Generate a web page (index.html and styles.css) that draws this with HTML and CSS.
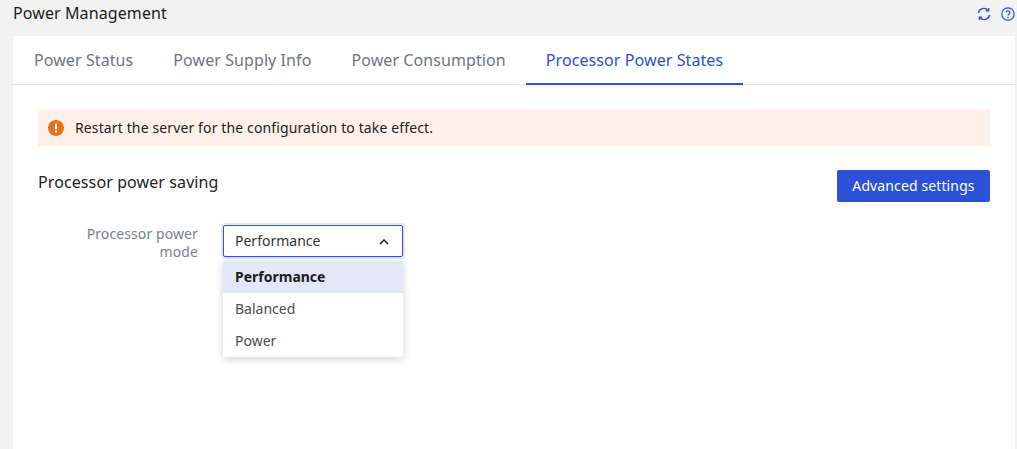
FILE: index.html
```html
<!DOCTYPE html>
<html lang="en">
<head>
<meta charset="utf-8">
<title>Power Management</title>
<link rel="stylesheet" href="styles.css">
</head>
<body>
<div class="page">
  <header class="topbar">
    <h1 class="page-title">Power Management</h1>
    <div class="top-icons">
      <svg class="icon" viewBox="0 0 14 14" fill="none" stroke="#2c50d8" stroke-width="1.4">
        <path d="M1.4 6.2A5.6 5.6 0 0 1 11 3.2"/>
        <path d="M12.6 7.8A5.6 5.6 0 0 1 3 10.8"/>
        <path d="M11.7 1v2.9H8.8" stroke-width="1.3"/>
        <path d="M2.3 13v-2.9h2.9" stroke-width="1.3"/>
      </svg>
      <svg class="icon" viewBox="0 0 14 14" fill="none" stroke="#2c50d8" stroke-width="1.2">
        <circle cx="7" cy="7" r="6.2"/>
        <path d="M5.2 5.6A1.8 1.8 0 1 1 7.9 7.2C7.3 7.6 7 7.9 7 8.6"/>
        <circle cx="7" cy="10.3" r=".5" fill="#2c50d8" stroke-width=".5"/>
      </svg>
    </div>
  </header>
  <main class="card">
    <nav class="tabs">
      <a class="tab">Power Status</a>
      <a class="tab">Power Supply Info</a>
      <a class="tab">Power Consumption</a>
      <a class="tab tab-active">Processor Power States</a>
    </nav>
    <section class="content">
      <div class="alert">
        <svg class="alert-icon" viewBox="0 0 16 16">
          <circle cx="8" cy="8" r="8" fill="#e8701f"/>
          <rect x="7" y="3.4" width="2" height="6.2" rx="1" fill="#fff"/>
          <circle cx="8" cy="11.6" r="1.15" fill="#fff"/>
        </svg>
        <span>Restart the server for the configuration to take effect.</span>
      </div>
      <div class="section-head">
        <h2 class="section-title">Processor power saving</h2>
        <button class="primary-btn">Advanced settings</button>
      </div>
      <div class="form-row">
        <label class="form-label">Processor power mode</label>
        <div class="select-wrap">
          <div class="select">
            <span class="select-value">Performance</span>
            <svg class="chevron" viewBox="0 0 10 6" fill="none" stroke="#222" stroke-width="1.6">
              <path d="M1 5l4-4 4 4"/>
            </svg>
          </div>
          <ul class="menu">
            <li class="menu-item menu-item-selected">Performance</li>
            <li class="menu-item">Balanced</li>
            <li class="menu-item">Power</li>
          </ul>
        </div>
      </div>
    </section>
  </main>
</div>
</body>
</html>
```

FILE: styles.css
```css
* { box-sizing: border-box; }
html, body { margin: 0; height: 100%; overflow: hidden; }
body {
  background: #f2f2f2;
  font-family: "Noto Sans", "Open Sans", sans-serif;
  color: #222;
  letter-spacing: .1px;
}
.page { display: flex; flex-direction: column; height: 449px; padding: 0 2px 0 13px; }
.topbar {
  height: 36px;
  display: flex;
  align-items: flex-start;
  justify-content: space-between;
  flex: none;
}
.page-title { margin: 2px 0 0; font-size: 16px; line-height: 22px; font-weight: 400; color: #1c1c1c; }
.top-icons { display: flex; gap: 10px; margin-top: 7px; margin-right: 0; }
.icon { width: 14px; height: 14px; display: block; }
.card { flex: 1; background: #fff; }
.tabs { display: flex; height: 49px; border-bottom: 1px solid #e6e6e8; padding-left: 1px; }
.tab {
  height: 49px;
  padding: 0 20px;
  font-size: 16px;
  line-height: 48px;
  letter-spacing: .085px;
  color: #6f7480;
}
.tab-active { color: #2c50d8; border-bottom: 2px solid #2c50d8; }
.content { padding: 24px 25px 0; }
.alert {
  height: 37px;
  background: #fff1e9;
  display: flex;
  align-items: center;
  gap: 11px;
  padding-left: 10px;
  font-size: 14px;
  letter-spacing: .125px;
  color: #222;
}
.alert-icon { width: 16px; height: 16px; flex: none; }
.section-head { display: flex; justify-content: space-between; align-items: flex-start; margin-top: 24px; }
.section-title { margin: 0; font-size: 16px; line-height: 24px; font-weight: 400; color: #222; }
.primary-btn {
  width: 153px;
  height: 32px;
  border: 0;
  border-radius: 2px;
  background: #2c50d8;
  color: #fff;
  font: 14px/32px "Noto Sans", "Open Sans", sans-serif;
  letter-spacing: .12px;
  padding: 0;
}
.form-row { display: flex; margin-top: 23px; }
.form-label {
  width: 160px;
  font-size: 14px;
  line-height: 18px;
  text-align: right;
  color: #7c7f88;
  padding-left: 30px;
  flex: none;
}
.select-wrap { position: relative; margin-left: 25px; width: 180px; }
.select {
  height: 32px;
  border: 1px solid #2c50d8;
  border-radius: 2px;
  box-shadow: 0 0 0 2px #e3e7f9;
  display: flex;
  align-items: center;
  justify-content: space-between;
  padding: 0 14px 0 11px;
  font-size: 14px;
  letter-spacing: 0;
  color: #333;
}
.select-value { margin-top: -2px; }
.chevron { width: 10px; height: 6px; margin-top: 2px; margin-right: -1px; }
.menu {
  position: absolute;
  top: 36px;
  left: 0;
  width: 180px;
  margin: 0;
  padding: 0;
  list-style: none;
  background: #fff;
  box-shadow: 0 2px 8px rgba(0, 0, 0, .18);
  border-radius: 2px;
  letter-spacing: 0;
}
.menu-item { height: 32px; line-height: 32px; padding-left: 12px; font-size: 14px; color: #4a4a4a; }
.menu-item-selected { background: #e3e8f8; color: #1c1c1c; font-weight: 700; }
```
